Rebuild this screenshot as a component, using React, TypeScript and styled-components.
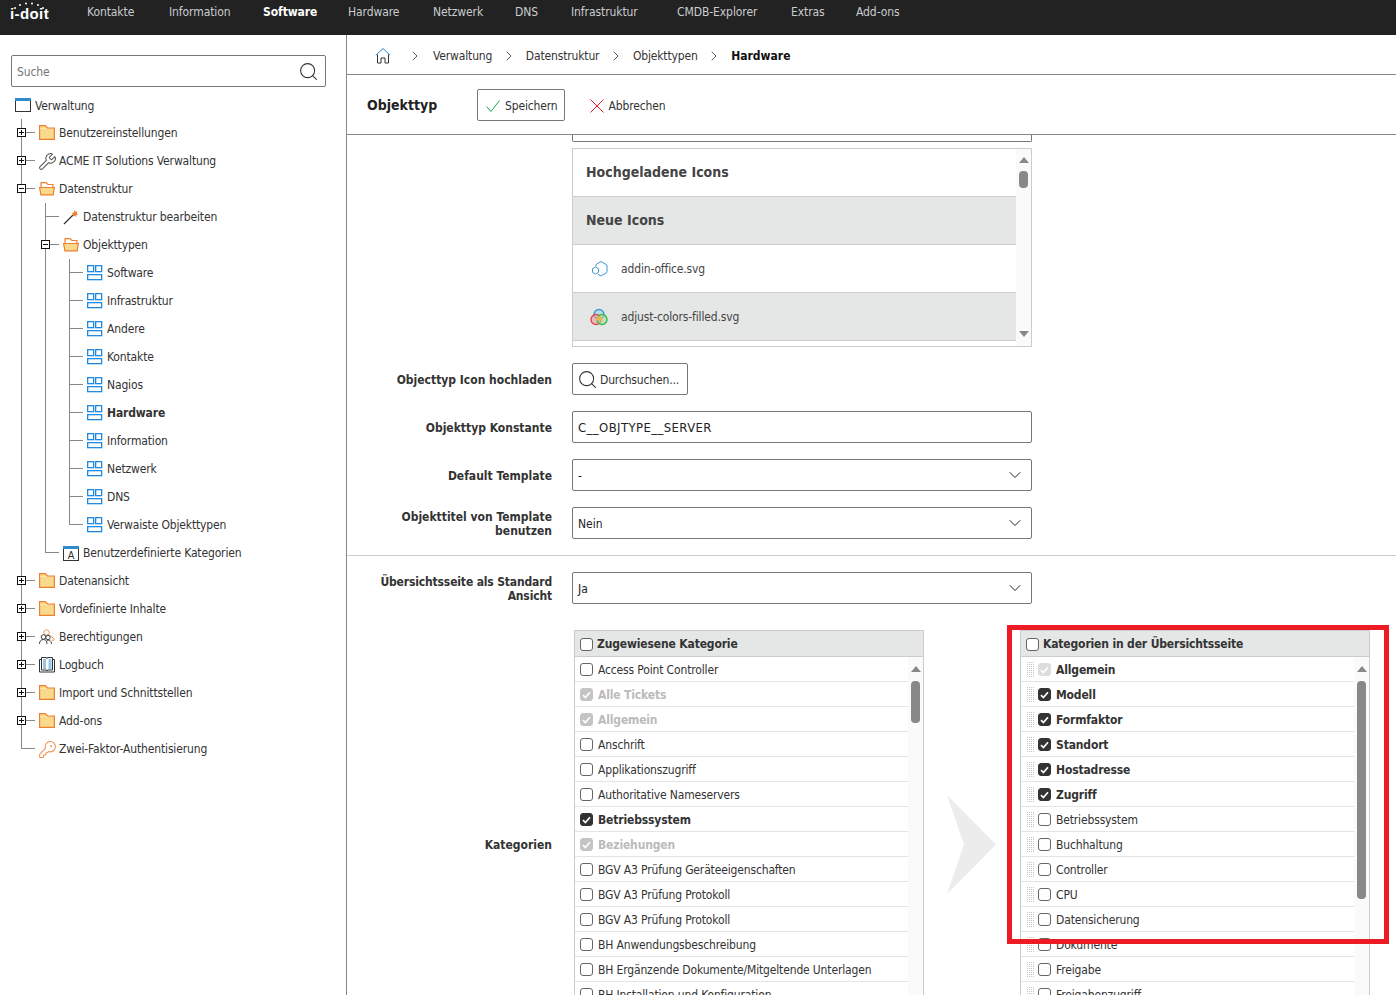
import React from "react";
import styled, { createGlobalStyle } from "styled-components";
import { ChevronDown, ChevronRight, KeyRound, Search, Wrench } from "lucide-react";

const FONT = `"DejaVu Sans Condensed", "DejaVu Sans", sans-serif`;

const GlobalStyle = createGlobalStyle`
  html, body {
    margin: 0;
    height: 995px;
    overflow: hidden;
    background: #fff;
    font-family: ${FONT};
    font-size: 12px;
    letter-spacing: -0.15px;
    color: #333;
  }
  * { box-sizing: border-box; }
`;

/* ---------- icons ---------- */

const FolderClosed = () => (
  <svg width="16" height="16" viewBox="0 0 16 16">
    <path d="M.6.6h5.900l2 2.400h6.900v11.400H.6z" fill="#f9da8c" stroke="#ee7f2f" strokeWidth="1.200" />
    <path d="M1 3.500h6.500" stroke="#fbe7b4" />
  </svg>
);

const FolderOpen = () => (
  <svg width="16" height="16" viewBox="0 0 16 16">
    <path d="M2.100 7V1.600h5l1.800 1.900h5V7" fill="#fff" stroke="#ee7f2f" strokeWidth="1.200" />
    <path d="M.6 6.500h14.800l-1.300 7.400H1.900z" fill="#f9da8c" stroke="#ee7f2f" strokeWidth="1.200" />
  </svg>
);

const PaneIcon = () => (
  <svg width="16" height="16" viewBox="0 0 16 16" fill="none" stroke="#1f8ae0" strokeWidth="1.300">
    <rect x=".65" y=".65" width="6" height="6" />
    <rect x="8.650" y=".65" width="6" height="6" />
    <rect x=".65" y="9.650" width="14" height="5" />
  </svg>
);

const WindowIcon = () => (
  <svg width="16" height="16" viewBox="0 0 16 16">
    <rect x=".5" y=".5" width="15" height="13" fill="#fff" stroke="#333" />
    <rect x="0" y="0" width="16" height="3" fill="#2d8ccb" />
  </svg>
);

const CustomCategoryIcon = () => (
  <svg width="16" height="16" viewBox="0 0 16 16">
    <rect x=".5" y="1.500" width="15" height="14" fill="#fff" stroke="#333" />
    <rect x="0" y="1" width="16" height="3" fill="#2d8ccb" />
    <text x="8" y="14" textAnchor="middle" fontSize="10" fontFamily="Liberation Sans, sans-serif" fill="#333">
      A
    </text>
  </svg>
);

const WandIcon = () => (
  <svg width="16" height="16" viewBox="0 0 16 16">
    <path d="M1 15 10 6" stroke="#333" strokeWidth="1.300" />
    <path d="m11.500 1 .8 1.800 2-.4-.6 2 1.600 1.200-2 .5-.3 2-1.500-1.400-1.800.8.4-2-1.400-1.400 2-.3z" fill="#ee7f2f" />
  </svg>
);

const PeopleKeyIcon = () => (
  <svg width="16" height="16" viewBox="0 0 16 16" fill="none">
    <circle cx="7.500" cy="3.500" r="2.700" stroke="#ee9a5f" />
    <path d="m9.500 5.500 6 4.500-1 1.500-2-.5" stroke="#ee9a5f" />
    <circle cx="4.500" cy="8" r="2.300" stroke="#444" />
    <circle cx="9" cy="8.500" r="2.200" stroke="#444" />
    <path d="M.5 15c0-3 1.500-4.500 4-4.500s3.500 1.500 3.500 4.500M8 11.500c2.500-1 4.500.5 4.500 3.500" stroke="#444" />
  </svg>
);

const BookIcon = () => (
  <svg width="16" height="16" viewBox="0 0 16 16" fill="none">
    <path d="M.5 2.500h15v12.500h-15z" stroke="#333" />
    <path d="M2.500.5h5l.5 1 .5-1h5v12.500h-5l-.5 1-.5-1h-5z" fill="#fff" stroke="#333" />
    <path d="M4 3h3M4 5h3M4 7h3M4 9h3M4 11h3M9.500 3h3M9.500 5h3M9.500 7h3M9.500 9h3M9.500 11h3" stroke="#2d8ccb" />
  </svg>
);

const HomeIcon = () => (
  <svg width="16" height="17" viewBox="0 0 16 17" fill="none">
    <path d="M.8 8.200 8 1.500l7.200 6.700" stroke="#2d8ccb" />
    <path d="M2.500 7.500v8.500h3.500v-5h4v5h3.500V7.500" stroke="#333" />
  </svg>
);

const HexIcon = () => (
  <svg width="18" height="18" viewBox="0 0 18 18" fill="none" stroke="#3f9bd5">
    <path d="M6 6.500V4.500L11 1.500l6 3.500v7.500L11 16l-3-1.800" />
    <path d="m5.500 7 3 1.700v3.600l-3 1.700-3-1.700V8.700z" />
  </svg>
);

const ColorsIcon = () => (
  <svg width="18" height="18" viewBox="0 0 18 18" fill="none" strokeWidth="1.400">
    <circle cx="9" cy="6.500" r="5" fill="#9fd6ef" stroke="#3f9bd5" fillOpacity=".6" />
    <circle cx="6" cy="11.500" r="5" fill="#f2a0a8" stroke="#e2464f" fillOpacity=".6" />
    <circle cx="12" cy="11.500" r="5" fill="#a5dfa0" stroke="#43b649" fillOpacity=".6" />
    <path d="M7 8.500h4l1 3-3 2-3-2z" fill="#f3b54a" />
  </svg>
);

const SaveTick = () => (
  <svg width="14" height="12" viewBox="0 0 14 12" fill="none" stroke="#1aa551">
    <path d="M.5 6.500 5 11.500 13.500.5" />
  </svg>
);

const CancelCross = () => (
  <svg width="14" height="14" viewBox="0 0 14 14" fill="none" stroke="#e8202a">
    <path d="m.5.5 13 13M13.500.5l-13 13" />
  </svg>
);

const BoxTick = () => (
  <svg width="9" height="8" viewBox="0 0 9 8" fill="none" stroke="#fff" strokeWidth="1.700">
    <path d="M1 4.200 3.400 6.500 8 1.200" />
  </svg>
);

/* ---------- top bar ---------- */

const TopBar = styled.header`
  height: 35px;
  background: #222;
  display: flex;
  align-items: flex-start;
  padding-left: 10px;
`;

const Logo = styled.div`
  position: relative;
  width: 77px;
  color: #fff;
  font: bold 15px/1 "Liberation Sans", sans-serif;
  letter-spacing: 0.4px;
  padding-top: 6px;
  svg {
    position: absolute;
    left: 2px;
    top: 2px;
  }
`;

const NavList = styled.nav`
  display: flex;
`;

const NavLink = styled.a<{ $active?: boolean; $width: number }>`
  width: ${(p) => p.$width}px;
  line-height: 24px;
  letter-spacing: -0.08px;
  color: ${(p) => (p.$active ? "#fff" : "#c9cdd0")};
  font-weight: ${(p) => (p.$active ? 700 : 400)};
  white-space: nowrap;
`;

/* ---------- sidebar ---------- */

const Page = styled.div`
  display: flex;
  height: 960px;
  overflow: hidden;
`;

const Sidebar = styled.aside`
  width: 347px;
  flex: none;
  border-right: 1px solid #888;
  padding-top: 20px;
`;

const SearchBox = styled.div`
  margin: 0 0 5px 11px;
  width: 315px;
  height: 32px;
  border: 1px solid #777;
  border-radius: 2px;
  display: flex;
  align-items: center;
  justify-content: space-between;
  padding: 1px 6px 0 5px;
  color: #777;
  svg {
    color: #333;
    margin-top: -1px;
  }
`;

const RootRow = styled.div`
  height: 27px;
  padding-left: 15px;
  display: flex;
  align-items: center;
  gap: 4px;
  color: #333;
  svg {
    margin-top: 1px;
  }
`;

const TreeRow = styled.div`
  height: 28px;
  padding-left: 9px;
  display: flex;
  color: #333;
`;

const GuideCell = styled.span<{ $kind: "blank" | "pipe" | "tee" | "end" }>`
  position: relative;
  width: 24px;
  flex: none;
  &::before {
    content: "";
    display: ${(p) => (p.$kind === "blank" ? "none" : "block")};
    position: absolute;
    left: 12px;
    top: 0;
    width: 1px;
    height: ${(p) => (p.$kind === "end" ? "14px" : "100%")};
    background: #888;
  }
  &::after {
    content: "";
    display: ${(p) => (p.$kind === "tee" || p.$kind === "end" ? "block" : "none")};
    position: absolute;
    left: 12px;
    top: 13px;
    width: 14px;
    height: 1px;
    background: #888;
  }
`;

const Toggle = styled.span`
  position: absolute;
  z-index: 1;
  left: 8px;
  top: 9px;
  width: 9px;
  height: 9px;
  border: 1px solid #111;
  background: #fff;
  display: block;
  &::before {
    content: "";
    position: absolute;
    left: 1px;
    top: 3px;
    width: 5px;
    height: 1px;
    background: #111;
  }
`;

const TogglePlus = styled(Toggle)`
  &::after {
    content: "";
    position: absolute;
    left: 3px;
    top: 1px;
    width: 1px;
    height: 5px;
    background: #111;
  }
`;

const NodeContent = styled.span<{ $bold?: boolean }>`
  margin-left: 6px;
  display: flex;
  align-items: center;
  gap: 4px;
  height: 28px;
  font-weight: ${(p) => (p.$bold ? 700 : 400)};
  white-space: nowrap;
  svg {
    flex: none;
  }
`;

const OversizedIcon = styled.span`
  width: 16px;
  height: 16px;
  flex: none;
  display: flex;
  align-items: center;
  justify-content: center;
`;

type TreeNode = {
  label: string;
  icon: React.ReactNode;
  toggle?: "plus" | "minus";
  bold?: boolean;
  children?: TreeNode[];
};

const pane = (label: string, bold?: boolean): TreeNode => ({ label, icon: <PaneIcon />, bold });

const tree: TreeNode[] = [
  { label: "Benutzereinstellungen", icon: <FolderClosed />, toggle: "plus" },
  {
    label: "ACME IT Solutions Verwaltung",
    icon: (
      <OversizedIcon>
        <Wrench size={19} strokeWidth={1.3} color="#555" />
      </OversizedIcon>
    ),
    toggle: "plus",
  },
  {
    label: "Datenstruktur",
    icon: <FolderOpen />,
    toggle: "minus",
    children: [
      { label: "Datenstruktur bearbeiten", icon: <WandIcon /> },
      {
        label: "Objekttypen",
        icon: <FolderOpen />,
        toggle: "minus",
        children: [
          pane("Software"),
          pane("Infrastruktur"),
          pane("Andere"),
          pane("Kontakte"),
          pane("Nagios"),
          pane("Hardware", true),
          pane("Information"),
          pane("Netzwerk"),
          pane("DNS"),
          pane("Verwaiste Objekttypen"),
        ],
      },
      { label: "Benutzerdefinierte Kategorien", icon: <CustomCategoryIcon /> },
    ],
  },
  { label: "Datenansicht", icon: <FolderClosed />, toggle: "plus" },
  { label: "Vordefinierte Inhalte", icon: <FolderClosed />, toggle: "plus" },
  { label: "Berechtigungen", icon: <PeopleKeyIcon />, toggle: "plus" },
  { label: "Logbuch", icon: <BookIcon />, toggle: "plus" },
  { label: "Import und Schnittstellen", icon: <FolderClosed />, toggle: "plus" },
  { label: "Add-ons", icon: <FolderClosed />, toggle: "plus" },
  {
    label: "Zwei-Faktor-Authentisierung",
    icon: (
      <OversizedIcon>
        <KeyRound size={19} strokeWidth={1.3} color="#ee8f4f" />
      </OversizedIcon>
    ),
  },
];

function TreeBranch({ nodes, guides }: { nodes: TreeNode[]; guides: boolean[] }) {
  return (
    <>
      {nodes.map((node, i) => {
        const last = i === nodes.length - 1;
        return (
          <React.Fragment key={node.label}>
            <TreeRow>
              {guides.map((open, g) => (
                <GuideCell key={g} $kind={open ? "pipe" : "blank"} />
              ))}
              <GuideCell $kind={last ? "end" : "tee"}>
                {node.toggle === "plus" && <TogglePlus />}
                {node.toggle === "minus" && <Toggle />}
              </GuideCell>
              <NodeContent $bold={node.bold}>
                {node.icon}
                {node.label}
              </NodeContent>
            </TreeRow>
            {node.children && <TreeBranch nodes={node.children} guides={[...guides, !last]} />}
          </React.Fragment>
        );
      })}
    </>
  );
}

/* ---------- main ---------- */

const Main = styled.main`
  flex: 1;
  min-width: 0;
  display: flex;
  flex-direction: column;
`;

const Breadcrumb = styled.div`
  height: 40px;
  flex: none;
  border-bottom: 1px solid #888;
  display: flex;
  align-items: center;
  padding: 2px 0 0 28px;
  color: #333;
`;

const CrumbSep = styled.span<{ $first?: boolean }>`
  display: flex;
  flex: none;
  width: ${(p) => (p.$first ? 42 : 33.5)}px;
  padding-left: ${(p) => (p.$first ? 6 : 0)}px;
  justify-content: center;
  color: #333;
`;

const CrumbLabel = styled.span<{ $current?: boolean }>`
  font-weight: ${(p) => (p.$current ? 700 : 400)};
  letter-spacing: ${(p) => (p.$current ? 0 : -0.15)}px;
  color: ${(p) => (p.$current ? "#111" : "#333")};
  white-space: nowrap;
`;

const Toolbar = styled.div`
  height: 60px;
  flex: none;
  border-bottom: 1px solid #888;
  display: flex;
  align-items: center;
  padding: 0 0 0 20px;
`;

const ToolbarTitle = styled.h1`
  margin: 0;
  width: 110px;
  font-size: 14px;
  letter-spacing: 0;
  font-weight: 700;
  color: #222;
`;

const ToolbarButton = styled.button<{ $plain?: boolean }>`
  height: 32px;
  padding: 2px 6px 0 8px;
  margin-right: ${(p) => (p.$plain ? 0 : 16)}px;
  display: flex;
  align-items: center;
  gap: 5px;
  background: #fff;
  border: 1px solid ${(p) => (p.$plain ? "transparent" : "#777")};
  border-radius: 2px;
  font: inherit;
  letter-spacing: inherit;
  color: #333;
`;

const Content = styled.div`
  flex: 1;
  min-height: 0;
  overflow: hidden;
`;

const ClippedBox = styled.div`
  margin-left: 225px;
  width: 460px;
  height: 7px;
  border: 1px solid #777;
  border-top: 0;
  border-radius: 0 0 2px 2px;
  margin-bottom: 6px;
`;

const IconList = styled.div`
  margin: 0 0 16px 225px;
  width: 460px;
  height: 199px;
  border: 1px solid #ccc;
  display: flex;
`;

const IconRows = styled.div`
  flex: 1;
`;

const IconRow = styled.div<{ $shaded?: boolean; $heading?: boolean }>`
  height: 48px;
  border-bottom: 1px solid #ccc;
  background: ${(p) => (p.$shaded ? "#e5e7e6" : "#fff")};
  display: flex;
  align-items: center;
  gap: 13px;
  padding-left: ${(p) => (p.$heading ? 13 : 17)}px;
  padding-bottom: ${(p) => (p.$heading ? 2 : 0)}px;
  font-size: ${(p) => (p.$heading ? 14 : 12)}px;
  font-weight: ${(p) => (p.$heading ? 700 : 400)};
  letter-spacing: ${(p) => (p.$heading ? 0 : -0.15)}px;
  color: #444;
`;

const Track = styled.div`
  width: 15px;
  flex: none;
  background: #fafafa;
  display: flex;
  flex-direction: column;
  align-items: center;
`;

const ArrowUp = styled.span<{ $top: number }>`
  margin-top: ${(p) => p.$top}px;
  width: 0;
  height: 0;
  border: 5px solid transparent;
  border-top: 0;
  border-bottom: 6px solid #888;
`;

const ArrowDown = styled.span`
  margin-top: auto;
  margin-bottom: 9px;
  width: 0;
  height: 0;
  border: 5px solid transparent;
  border-bottom: 0;
  border-top: 6px solid #888;
`;

const Thumb = styled.span<{ $top: number; $height: number }>`
  margin-top: ${(p) => p.$top}px;
  width: 9px;
  height: ${(p) => p.$height}px;
  border-radius: 4px;
  background: #888;
`;

const FormRow = styled.div`
  display: flex;
  align-items: center;
  gap: 20px;
  margin-bottom: 16px;
`;

const FieldLabel = styled.label<{ $tight?: boolean }>`
  width: 205px;
  flex: none;
  padding-top: 2px;
  text-align: right;
  font-weight: 700;
  line-height: 14px;
  letter-spacing: ${(p) => (p.$tight ? -0.15 : 0)}px;
  color: #333;
`;

const TextField = styled.div<{ $constant?: boolean }>`
  width: 460px;
  height: 32px;
  border: 1px solid #777;
  border-radius: 2px;
  display: flex;
  align-items: center;
  justify-content: space-between;
  padding: ${(p) => (p.$constant ? 0 : 2)}px 6px 0 5px;
  font-size: ${(p) => (p.$constant ? 13 : 12)}px;
  letter-spacing: ${(p) => (p.$constant ? 0.4 : 0)}px;
  color: #222;
  svg {
    margin-top: -2px;
  }
`;

const BrowseButton = styled.button`
  width: 116px;
  height: 32px;
  display: flex;
  align-items: center;
  gap: 2px;
  padding: 0 0 0 4px;
  border: 1px solid #777;
  border-radius: 2px;
  background: #fff;
  font: inherit;
  letter-spacing: inherit;
  color: #333;
  span {
    padding-top: 1px;
  }
`;

const Divider = styled.hr`
  margin: 0 0 16px;
  border: 0;
  border-top: 1px solid #ccc;
`;

const ListsRow = styled.div`
  margin-top: 26px;
  display: flex;
  align-items: center;
`;

const ListsLabel = styled(FieldLabel)`
  margin-right: 22px;
`;

const ListPanel = styled.section`
  position: relative;
  width: 350px;
  height: 428px;
  flex: none;
  border: 1px solid #ccc;
  display: flex;
  flex-direction: column;
`;

const ListHeader = styled.div<{ $left: number }>`
  height: 26px;
  flex: none;
  background: #e5e7e6;
  border-bottom: 1px solid #ccc;
  display: flex;
  align-items: center;
  gap: 4px;
  padding-left: ${(p) => p.$left}px;
  font-weight: 700;
  color: #333;
`;

const ListBody = styled.div`
  flex: 1;
  min-height: 0;
  display: flex;
  overflow: hidden;
`;

const ListRows = styled.div`
  flex: 1;
  min-width: 0;
`;

const ListRow = styled.div<{ $state: "off" | "on" | "fixed"; $muted?: boolean; $left: number }>`
  height: 25px;
  padding-top: 2px;
  border-bottom: 1px solid #e4e4e4;
  display: flex;
  align-items: center;
  gap: 5px;
  padding-left: ${(p) => p.$left}px;
  font-weight: ${(p) => (p.$state === "off" ? 400 : 700)};
  color: ${(p) => (p.$muted ? "#bbb" : "#333")};
  white-space: nowrap;
`;

const Box = styled.span<{ $state: "off" | "on" | "fixed"; $pale?: boolean }>`
  width: 13px;
  height: 13px;
  margin-top: -1px;
  flex: none;
  border-radius: 3px;
  display: flex;
  align-items: center;
  justify-content: center;
  border: 1px solid
    ${(p) => (p.$state === "off" ? "#666" : p.$state === "on" ? "#333" : p.$pale ? "#ddd" : "#c4c4c4")};
  background: ${(p) => (p.$state === "off" ? "#fff" : p.$state === "on" ? "#333" : p.$pale ? "#ddd" : "#c4c4c4")};
`;

const HeaderBox = styled(Box)`
  margin-top: 2px;
`;

const Grip = styled.span`
  width: 8px;
  height: 16px;
  flex: none;
  margin-right: -1px;
  background: conic-gradient(#c4c4c4 25%, transparent 0) 0 0 / 2px 2px;
`;

const ArrowColumn = styled.div`
  width: 96px;
  flex: none;
  display: flex;
  justify-content: center;
`;

const RedFrame = styled.div`
  position: absolute;
  left: -14px;
  top: -6px;
  width: 382px;
  height: 319px;
  border: 5px solid #ed1c24;
  pointer-events: none;
`;

type Cat = { label: string; state: "off" | "on" | "fixed" };

const assigned: Cat[] = [
  { label: "Access Point Controller", state: "off" },
  { label: "Alle Tickets", state: "fixed" },
  { label: "Allgemein", state: "fixed" },
  { label: "Anschrift", state: "off" },
  { label: "Applikationszugriff", state: "off" },
  { label: "Authoritative Nameservers", state: "off" },
  { label: "Betriebssystem", state: "on" },
  { label: "Beziehungen", state: "fixed" },
  { label: "BGV A3 Prüfung Geräteeigenschaften", state: "off" },
  { label: "BGV A3 Prüfung Protokoll", state: "off" },
  { label: "BGV A3 Prüfung Protokoll", state: "off" },
  { label: "BH Anwendungsbeschreibung", state: "off" },
  { label: "BH Ergänzende Dokumente/Mitgeltende Unterlagen", state: "off" },
  { label: "BH Installation und Konfiguration", state: "off" },
];

const overview: Cat[] = [
  { label: "Allgemein", state: "fixed" },
  { label: "Modell", state: "on" },
  { label: "Formfaktor", state: "on" },
  { label: "Standort", state: "on" },
  { label: "Hostadresse", state: "on" },
  { label: "Zugriff", state: "on" },
  { label: "Betriebssystem", state: "off" },
  { label: "Buchhaltung", state: "off" },
  { label: "Controller", state: "off" },
  { label: "CPU", state: "off" },
  { label: "Datensicherung", state: "off" },
  { label: "Dokumente", state: "off" },
  { label: "Freigabe", state: "off" },
  { label: "Freigabenzugriff", state: "off" },
];

const navItems: [string, number, boolean?][] = [
  ["Kontakte", 82],
  ["Information", 94],
  ["Software", 85, true],
  ["Hardware", 85],
  ["Netzwerk", 82],
  ["DNS", 56],
  ["Infrastruktur", 106],
  ["CMDB-Explorer", 114],
  ["Extras", 65],
  ["Add-ons", 60],
];

const crumbs = ["Verwaltung", "Datenstruktur", "Objekttypen"];

export default function App() {
  return (
    <>
      <GlobalStyle />
      <TopBar>
        <Logo>
          <svg width="36" height="8" viewBox="0 0 36 8" fill="#fff">
            <circle cx="3" cy="6" r="1" />
            <circle cx="8" cy="3" r="1" />
            <circle cx="14" cy="1.500" r="1" />
            <circle cx="20" cy="1.500" r="1" />
            <circle cx="26" cy="3" r="1" />
            <circle cx="31" cy="6" r="1" />
          </svg>
          i-doit
        </Logo>
        <NavList>
          {navItems.map(([label, width, active]) => (
            <NavLink key={label} $width={width} $active={active}>
              {label}
            </NavLink>
          ))}
        </NavList>
      </TopBar>
      <Page>
        <Sidebar>
          <SearchBox>
            Suche
            <Search size={21} strokeWidth={1.2} />
          </SearchBox>
          <RootRow>
            <WindowIcon />
            Verwaltung
          </RootRow>
          <TreeBranch nodes={tree} guides={[]} />
        </Sidebar>
        <Main>
          <Breadcrumb>
            <HomeIcon />
            {crumbs.map((crumb, i) => (
              <React.Fragment key={crumb}>
                <CrumbSep $first={i === 0}>
                  <ChevronRight size={16} strokeWidth={1.2} />
                </CrumbSep>
                <CrumbLabel>{crumb}</CrumbLabel>
              </React.Fragment>
            ))}
            <CrumbSep>
              <ChevronRight size={16} strokeWidth={1.2} />
            </CrumbSep>
            <CrumbLabel $current>Hardware</CrumbLabel>
          </Breadcrumb>
          <Toolbar>
            <ToolbarTitle>Objekttyp</ToolbarTitle>
            <ToolbarButton>
              <SaveTick />
              Speichern
            </ToolbarButton>
            <ToolbarButton $plain>
              <CancelCross />
              Abbrechen
            </ToolbarButton>
          </Toolbar>
          <Content>
            <ClippedBox />
            <IconList>
              <IconRows>
                <IconRow $heading>Hochgeladene Icons</IconRow>
                <IconRow $heading $shaded>
                  Neue Icons
                </IconRow>
                <IconRow>
                  <HexIcon />
                  addin-office.svg
                </IconRow>
                <IconRow $shaded>
                  <ColorsIcon />
                  adjust-colors-filled.svg
                </IconRow>
              </IconRows>
              <Track>
                <ArrowUp $top={8} />
                <Thumb $top={8} $height={17} />
                <ArrowDown />
              </Track>
            </IconList>
            <FormRow>
              <FieldLabel>Objecttyp Icon hochladen</FieldLabel>
              <BrowseButton>
                <Search size={21} strokeWidth={1.2} />
                <span>Durchsuchen...</span>
              </BrowseButton>
            </FormRow>
            <FormRow>
              <FieldLabel>Objekttyp Konstante</FieldLabel>
              <TextField $constant>C__OBJTYPE__SERVER</TextField>
            </FormRow>
            <FormRow>
              <FieldLabel>Default Template</FieldLabel>
              <TextField>
                -
                <ChevronDown size={20} strokeWidth={1.2} />
              </TextField>
            </FormRow>
            <FormRow>
              <FieldLabel>Objekttitel von Template benutzen</FieldLabel>
              <TextField>
                Nein
                <ChevronDown size={20} strokeWidth={1.2} />
              </TextField>
            </FormRow>
            <Divider />
            <FormRow>
              <FieldLabel $tight>Übersichtsseite als Standard Ansicht</FieldLabel>
              <TextField>
                Ja
                <ChevronDown size={20} strokeWidth={1.2} />
              </TextField>
            </FormRow>
            <ListsRow>
              <ListsLabel>Kategorien</ListsLabel>
              <ListPanel>
                <ListHeader $left={5}>
                  <HeaderBox $state="off" />
                  Zugewiesene Kategorie
                </ListHeader>
                <ListBody>
                  <ListRows>
                    {assigned.map((c, i) => (
                      <ListRow key={i} $state={c.state} $muted={c.state === "fixed"} $left={5}>
                        <Box $state={c.state}>{c.state !== "off" && <BoxTick />}</Box>
                        {c.label}
                      </ListRow>
                    ))}
                  </ListRows>
                  <Track>
                    <ArrowUp $top={9} />
                    <Thumb $top={9} $height={42} />
                  </Track>
                </ListBody>
              </ListPanel>
              <ArrowColumn>
                <svg width="50" height="99" viewBox="0 0 50 99">
                  <path d="M0 0 49 49.500 0 99 17 49.500z" fill="#ececec" />
                </svg>
              </ArrowColumn>
              <ListPanel>
                <ListHeader $left={5}>
                  <HeaderBox $state="off" />
                  Kategorien in der Übersichtsseite
                </ListHeader>
                <ListBody>
                  <ListRows>
                    {overview.map((c, i) => (
                      <ListRow key={c.label} $state={c.state} $left={5}>
                        <Grip />
                        <Box $state={c.state} $pale={i === 0}>
                          {c.state !== "off" && <BoxTick />}
                        </Box>
                        {c.label}
                      </ListRow>
                    ))}
                  </ListRows>
                  <Track>
                    <ArrowUp $top={9} />
                    <Thumb $top={9} $height={218} />
                  </Track>
                </ListBody>
                <RedFrame />
              </ListPanel>
            </ListsRow>
          </Content>
        </Main>
      </Page>
    </>
  );
}
